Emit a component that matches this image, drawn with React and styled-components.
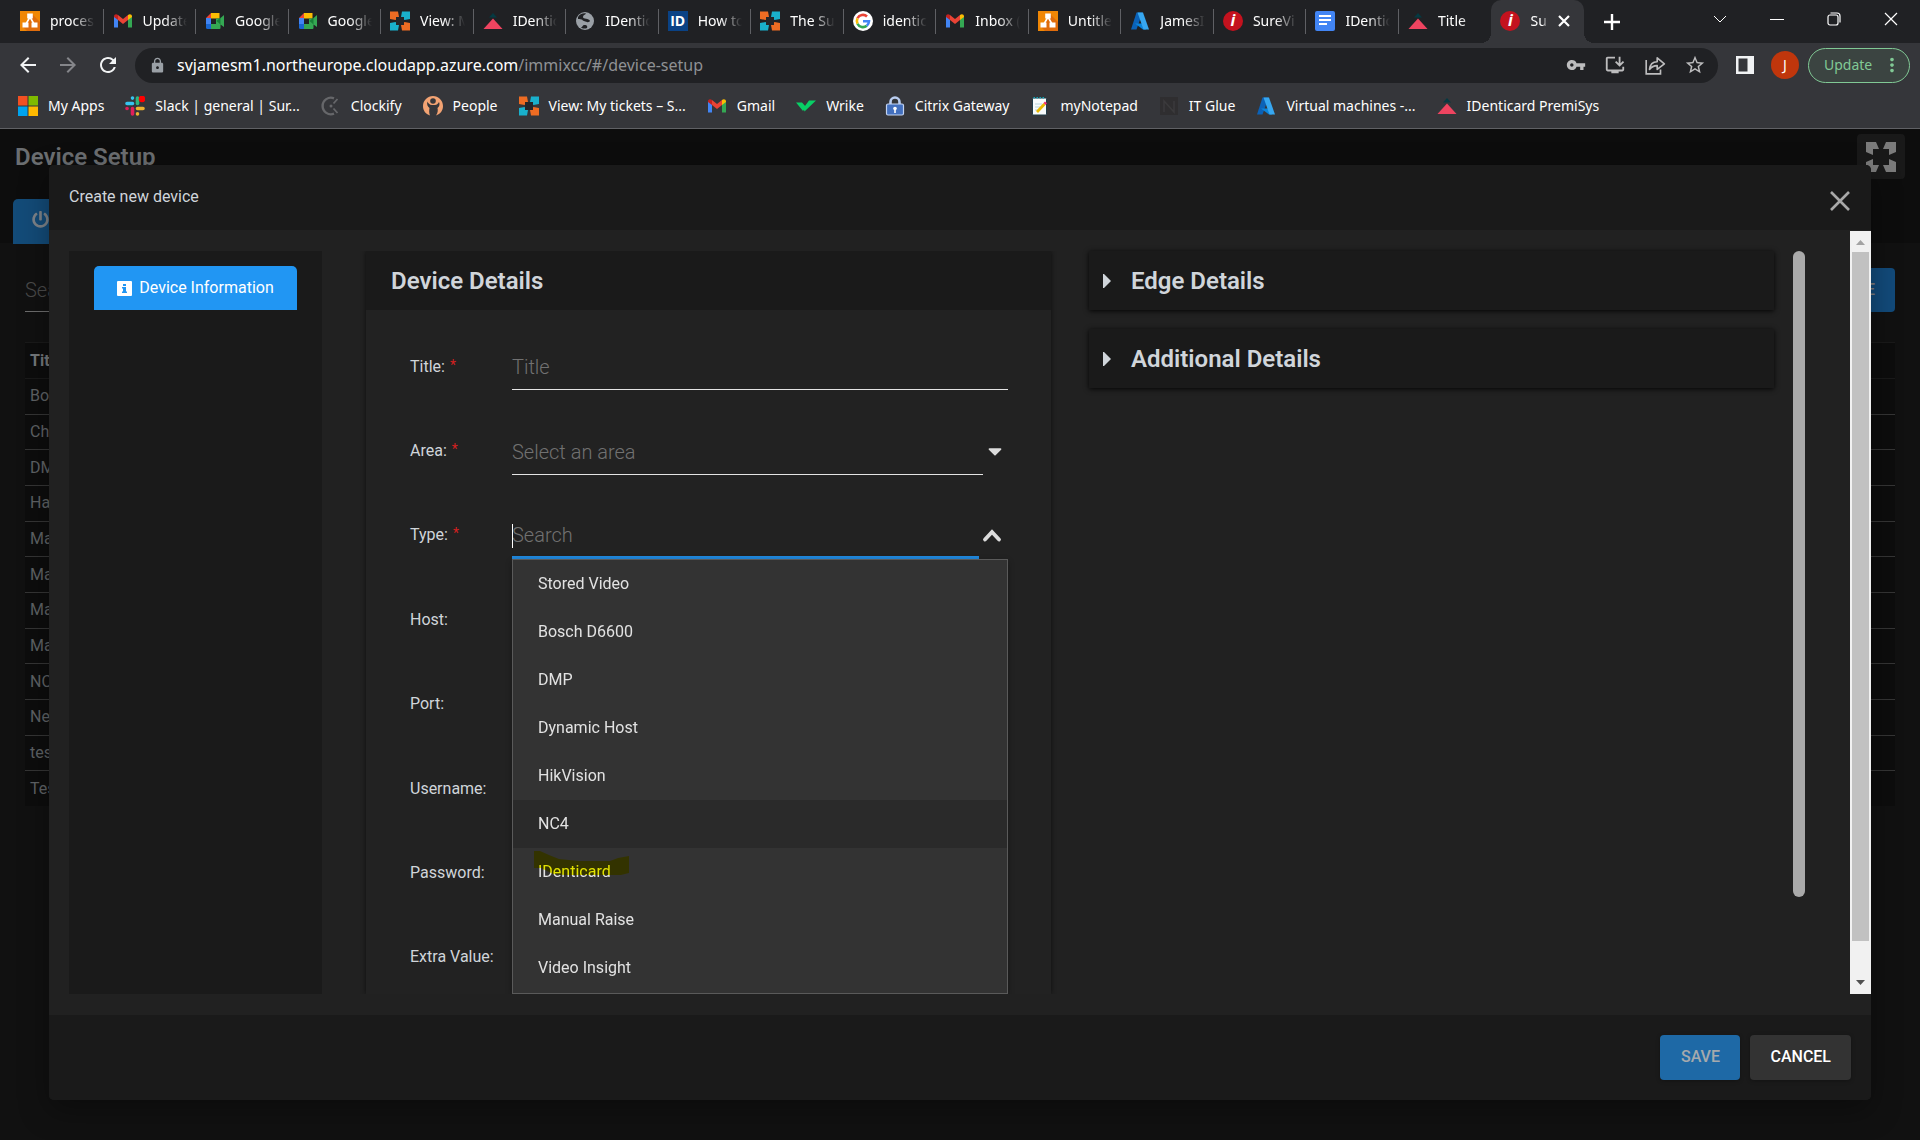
import React from "react";
import styled, { createGlobalStyle, css } from "styled-components";
import {
  MdArrowBack,
  MdArrowForward,
  MdRefresh,
  MdLock,
  MdVpnKey,
  MdInstallDesktop,
  MdStarBorder,
  MdMoreVert,
} from "react-icons/md";
import { FaPowerOff, FaCaretDown } from "react-icons/fa";

const GlobalStyle = createGlobalStyle`
  *, *::before, *::after { box-sizing: border-box; }
  html, body, #root { height: 100%; }
  body {
    margin: 0;
    overflow: hidden;
    background: #111;
    color: #d0d5da;
    font: 400 16px/24px Roboto, "Liberation Sans", sans-serif;
  }
  button, input, select { font: inherit; color: inherit; }
  button { cursor: pointer; border: 0; padding: 0; background: none; }
  svg { display: block; flex: none; }
`;

/* ---------- browser chrome ---------- */

const Window = styled.div`
  display: flex;
  flex-direction: column;
  height: 100%;
`;

const Chrome = styled.header`
  flex: none;
  background: #35363a;
  border-bottom: 1px solid #606165;
  color: #fff;
  font: 400 14px/20px "Noto Sans", "Open Sans", sans-serif;
`;

const TabStrip = styled.div`
  display: flex;
  height: 43px;
  padding-left: 11px;
  background: #202124;
`;

const TabList = styled.div`
  flex: 0 1 1573px;
  min-width: 0;
  display: grid;
  grid-template-columns: repeat(17, minmax(0, 1fr));
`;

const Tab = styled.button`
  position: relative;
  display: flex;
  align-items: center;
  gap: 10px;
  padding: 0 9px 2px;
  text-align: left;
  ${(p) =>
    p.$divided &&
    css`
      &::after {
        content: "";
        position: absolute;
        right: 0;
        top: 9px;
        height: 25px;
        width: 1px;
        background: #5f6064;
      }
    `}
  ${(p) =>
    p.$active &&
    css`
      padding-right: 14px;
      background: #35363a;
      border-radius: 10px 10px 0 0;
      &::before,
      &::after {
        content: "";
        position: absolute;
        bottom: 0;
        width: 10px;
        height: 10px;
      }
      &::before {
        right: 100%;
        background: radial-gradient(circle at 0 0, transparent 10px, #35363a 10px);
      }
      &::after {
        left: 100%;
        background: radial-gradient(circle at 100% 0, transparent 10px, #35363a 10px);
      }
    `}
`;

const TabLabel = styled.span`
  flex: 1;
  min-width: 0;
  overflow: hidden;
  white-space: nowrap;
  mask-image: linear-gradient(to right, #000 calc(100% - 22px), transparent);
`;

const ShortTabLabel = styled(TabLabel)`
  mask-image: linear-gradient(to right, #000 calc(100% - 6px), transparent);
`;

const NewTab = styled.button`
  display: flex;
  align-items: center;
  justify-content: center;
  width: 56px;
`;

const WindowButtons = styled.div`
  display: flex;
  align-items: center;
  margin-left: auto;
  height: 37px;
  padding-right: 1px;
`;

const WindowButton = styled.button`
  display: flex;
  align-items: center;
  justify-content: center;
  width: 57px;
  height: 37px;
`;

const Toolbar = styled.div`
  display: flex;
  align-items: center;
  height: 44px;
  padding: 0 10px 0 16px;
`;

const NavButton = styled.button`
  display: flex;
  width: 24px;
  margin-right: 16px;
  color: ${(p) => (p.$dim ? "#85868a" : "#f1f3f4")};
`;

const Omnibox = styled.div`
  flex: 1;
  display: flex;
  align-items: center;
  height: 35px;
  margin-left: -1px;
  padding: 0 12px 0 14px;
  border-radius: 18px;
  background: #202124;
`;

const Address = styled.div`
  flex: 1;
  margin-left: 11px;
  color: #8f9194;
  font-size: 16px;
  line-height: 24px;
  white-space: nowrap;
  b {
    color: #fff;
    font-weight: 400;
  }
`;

const OmniActions = styled.div`
  display: flex;
  align-items: center;
  gap: 18px;
  color: #bdbdbe;
  button {
    display: flex;
  }
`;

const PanelButton = styled.button`
  display: flex;
  margin-left: 18px;
`;

const Avatar = styled.button`
  width: 28px;
  height: 28px;
  margin: 0 9px 0 17px;
  border-radius: 50%;
  background: #c0360c;
  font-size: 14px;
  line-height: 28px;
`;

const UpdateButton = styled.button`
  display: flex;
  align-items: center;
  justify-content: space-between;
  width: 102px;
  height: 35px;
  padding: 0 6px 0 15px;
  border: 1px solid #81c995;
  border-radius: 18px;
  background: #3b4441;
  color: #81c995;
`;

const Bookmarks = styled.nav`
  display: flex;
  align-items: center;
  height: 41px;
  padding: 0 18px 3px;
  gap: 21px;
`;

const Bookmark = styled.a`
  display: flex;
  align-items: center;
  gap: 10px;
  color: inherit;
  text-decoration: none;
  white-space: nowrap;
`;

/* ---------- favicons ---------- */

const LetterIcon = styled.span`
  flex: none;
  width: 20px;
  height: 20px;
  border-radius: ${(p) => (p.$round ? "50%" : "0")};
  background: ${(p) => p.$bg};
  color: #fff;
  font: ${(p) => (p.$round ? "italic 700 16px/19px" : "700 14px/20px")} "Open Sans", sans-serif;
  text-align: center;
`;

const Svg = ({ size = 20, box = 20, children, ...rest }) => (
  <svg width={size} height={size} viewBox={`0 0 ${box} ${box}`} fill="none" aria-hidden="true" {...rest}>
    {children}
  </svg>
);

const Diagram = () => (
  <Svg>
    <path fill="#f08705" d="M0 0h20v20H0z" />
    <path fill="#df6c0c" d="M12 3l8 8v9H7l-4-4 6-7z" />
    <path stroke="#fff" strokeWidth="1.6" d="M10 6 6 13M10 6l4 7" />
    <path fill="#fff" d="M7.2 2.5h5.6v5H7.2zM2.5 11.5h6v5h-6zM11.5 11.5h6v5h-6z" />
  </Svg>
);
const Gmail = () => (
  <Svg>
    <path fill="#4285f4" d="M1 5v11.5h4V8z" />
    <path fill="#34a853" d="M15 8v8.5h4V5z" />
    <path fill="#ea4335" d="M5 4l5 4 5-4v5l-5 4-5-4z" />
    <path fill="#c5221f" d="M1 5.5C1 3 3.500 2.600 5 4v5L1 6z" />
    <path fill="#fbbc04" d="M19 5.5C19 3 16.5 2.600 15 4v5l4-3z" />
  </Svg>
);
const Meet = () => (
  <Svg>
    <path fill="#ea4335" d="M6 2v5H1z" />
    <path fill="#fbbc04" d="M6 2h8.5v5.5H6z" />
    <path fill="#4285f4" d="M1 7h5v6H1z" />
    <path fill="#1967d2" d="M1 13h5v5H2.5Q1 18 1 16.5z" />
    <path fill="#34a853" d="M6 13h5V7.5h4L19 4v12l-3.5-2.5V17q0 1-1 1H6z" />
    <path fill="#188038" d="M11.5 10 15.5 6.5v7z" />
  </Svg>
);
const Ring = () => (
  <Svg>
    <path fill="#ee6c23" d="M0 .5h8l1 5.5-3.5 3L0 8zM20 19.5h-8l-1-5.5 3.5-3 5.5 1z" />
    <path fill="#19b0cc" d="M20 .5h-8L11 6l3.5 3L20 8zM0 19.5h8L9 14l-3.5-3-5.5 1z" />
    <path fill="#242529" d="M6 6h8v8H6z" />
  </Svg>
);
const Peak = () => (
  <Svg>
    <path fill="#053a42" d="M10 2l4 4.5H6z" />
    <path fill="#ee4460" d="M10 7.5 19.5 18H.5z" />
  </Svg>
);
const Globe = () => (
  <Svg>
    <circle cx="10" cy="10" r="9" fill="#9aa0a6" />
    <path
      fill="#202124"
      d="M3 6c2-3.5 6-4 8-3.5-1 1.5-3 1.5-3 3.5 0 2.5 6 1 7 4-.5 1-2 1.5-3 1-2.5-1-4-1-5-2.5C6 8.5 5 8 3 8zM9 14c2 0 4 .5 3 3-2 1-5 .5-6-.5 1.5-.5 2-2.5 3-2.5z"
    />
  </Svg>
);
const Google = () => (
  <Svg>
    <circle cx="10" cy="10" r="10" fill="#fff" />
    <g strokeWidth="2.6">
      <path stroke="#ea4335" d="M4.5 7.3A6 6 0 0 1 14 5.5" />
      <path stroke="#fbbc05" d="M4.5 12.7a6 6 0 0 1 0-5.4" />
      <path stroke="#34a853" d="M4.5 12.7a6 6 0 0 0 9.3 2" />
      <path stroke="#4285f4" d="M13.8 14.7A6 6 0 0 0 16 10.3h-6" />
    </g>
  </Svg>
);
const Azure = () => (
  <Svg>
    <path fill="#0b62b8" d="M6.5 1.5h6L6.5 18.5H1z" />
    <path fill="#0a84dc" d="M5 12.5h9l2 6h-3z" />
    <path fill="#37a7f0" d="M7.5 1.5H13l6 17h-5.5z" />
  </Svg>
);
const Docs = () => (
  <Svg>
    <rect width="20" height="20" rx="2" fill="#4285f4" />
    <path stroke="#fff" strokeWidth="2" d="M4 5h12M4 9h12M4 13h8" />
  </Svg>
);
const Microsoft = () => (
  <Svg>
    <path fill="#f25022" d="M0 0h9.5v9.5H0z" />
    <path fill="#7fba00" d="M10.5 0H20v9.5h-9.5z" />
    <path fill="#00a4ef" d="M0 10.5h9.5V20H0z" />
    <path fill="#ffb900" d="M10.5 10.5H20V20h-9.5z" />
  </Svg>
);
const Slack = () => (
  <Svg>
    <g strokeWidth="3.6" strokeLinecap="round">
      <path stroke="#36c5f0" d="M2 7.5h5.5M7.5 2v.1" />
      <path stroke="#2eb67d" d="M12.5 2v5.5" />
      <path stroke="#ecb22e" d="M12.5 12.5H18M12.5 18v-.1" />
      <path stroke="#e01e5a" d="M7.5 12.5V18M2 12.5h.1" />
    </g>
    <circle cx="17" cy="3" r="3.3" fill="#f00" />
  </Svg>
);
const Clock = () => (
  <Svg>
    <path stroke="#66676a" strokeWidth="2.4" d="M13 2.3a8.3 8.3 0 1 0 0 15.4" />
    <circle cx="10" cy="10" r="1.5" fill="#66676a" />
    <path stroke="#66676a" strokeWidth="1.8" d="M12.5 7.5l4-4.5M12.5 12.5l4 4.5" />
  </Svg>
);
const Person = () => (
  <Svg>
    <path
      fill="#f3a373"
      d="M7 19.5C2.5 18 0 14.5 0 10 0 4.5 4.5 0 10 0s10 4.5 10 10c0 4.5-2.5 8-7 9.5 2-3 2-5 1.5-7.5 2-1.5 2.5-4 1.5-6-1 2-2.5 3-4 3H9C6.500 9 5 7 4.5 5.5c-1 3 0 5 2 6.5-.5 2.5-.5 5 .5 7.5z"
    />
    <circle cx="10" cy="5" r="2.8" fill="#35363a" />
    <path fill="#35363a" d="M8 9.5h4.5l-.5 5-2 5-2-5z" />
  </Svg>
);
const Check = () => (
  <Svg>
    <path fill="#08cf65" d="M0 6.5h6l4 4.5-3 4zM8.5 15.5 7.5 12 13 4.5h7z" />
  </Svg>
);
const Padlock = () => (
  <Svg>
    <path stroke="#b9cdf0" strokeWidth="2.6" d="M5.5 9V6a4.5 4.5 0 0 1 9 0v3" />
    <rect x="1.5" y="8" width="17" height="11" rx="1.5" fill="#4370bf" stroke="#c4d4f2" strokeWidth="1.2" />
    <circle cx="10" cy="12.5" r="1.8" fill="#fff" />
    <path fill="#fff" d="M9.2 13h1.6v4H9.2z" />
  </Svg>
);
const Notepad = () => (
  <Svg>
    <rect x="2.5" y="2" width="14" height="17" rx="1" fill="#f7fbfc" stroke="#213c48" />
    <path stroke="#17a3b5" strokeWidth="1.5" strokeDasharray="1.5 1.5" d="M3.5 1.8h12" />
    <path stroke="#b9d4dc" d="M5 8h7M5 11h5M5 14h3" />
    <path stroke="#e8b800" strokeWidth="2.8" d="M7 16l7.5-8" />
    <path stroke="#f02d6b" strokeWidth="2.8" d="M14.5 8l1.5-1.6" />
  </Svg>
);
const Glue = () => (
  <Svg>
    <path fill="#2f2e30" d="M1 1h18v18H1z" />
    <path stroke="#3b3a3c" strokeWidth="1.5" d="M5 16V5l10 11V5" />
  </Svg>
);
const Id = () => <LetterIcon $bg="#0a4285">ID</LetterIcon>;
const Immix = () => (
  <LetterIcon $round $bg="#c4121e">
    i
  </LetterIcon>
);

const tabs = [
  [Diagram, "proces"],
  [Gmail, "Update"],
  [Meet, "Google"],
  [Meet, "Google"],
  [Ring, "View: M"],
  [Peak, "IDentic"],
  [Globe, "IDentic"],
  [Id, "How to"],
  [Ring, "The Su"],
  [Google, "identic"],
  [Gmail, "Inbox ("],
  [Diagram, "Untitle"],
  [Azure, "JamesI"],
  [Immix, "SureVi"],
  [Docs, "IDentic"],
  [Peak, "Title"],
];

const bookmarks = [
  [Microsoft, "My Apps"],
  [Slack, "Slack | general | Sur..."],
  [Clock, "Clockify"],
  [Person, "People"],
  [Ring, "View: My tickets – S..."],
  [Gmail, "Gmail"],
  [Check, "Wrike"],
  [Padlock, "Citrix Gateway"],
  [Notepad, "myNotepad"],
  [Glue, "IT Glue"],
  [Azure, "Virtual machines -..."],
  [Peak, "IDenticard PremiSys"],
];

function BrowserChrome() {
  return (
    <Chrome>
      <TabStrip>
        <TabList>
          {tabs.map(([Icon, label], i) => (
            <Tab key={i} $divided={i < tabs.length - 1}>
              <Icon />
              <TabLabel>{label}</TabLabel>
            </Tab>
          ))}
          <Tab $active>
            <Immix />
            <ShortTabLabel>Sur</ShortTabLabel>
            <Svg size={12} box={12} stroke="#fff" strokeWidth="2.2">
              <path d="M1 1l10 10M11 1 1 11" />
            </Svg>
          </Tab>
        </TabList>
        <NewTab aria-label="New tab">
          <Svg size={16} box={16} stroke="#fff" strokeWidth="2.4">
            <path d="M8 0v16M0 8h16" />
          </Svg>
        </NewTab>
        <WindowButtons>
          <WindowButton aria-label="Search tabs">
            <Svg size={14} box={14} stroke="#fff">
              <path d="M1 4l6 6 6-6" />
            </Svg>
          </WindowButton>
          <WindowButton aria-label="Minimize">
            <Svg size={14} box={14} stroke="#fff">
              <path d="M0 7.5h14" />
            </Svg>
          </WindowButton>
          <WindowButton aria-label="Restore">
            <Svg size={14} box={14} stroke="#fff" strokeWidth="1.2">
              <rect x="1" y="3" width="10" height="10" rx="2" />
              <path d="M3.5 1H10q3 0 3 3v6.5" />
            </Svg>
          </WindowButton>
          <WindowButton aria-label="Close">
            <Svg size={14} box={14} stroke="#fff" strokeWidth="1.2">
              <path d="M1 1l12 12M13 1 1 13" />
            </Svg>
          </WindowButton>
        </WindowButtons>
      </TabStrip>
      <Toolbar>
        <NavButton aria-label="Back">
          <MdArrowBack size={24} />
        </NavButton>
        <NavButton aria-label="Forward" $dim>
          <MdArrowForward size={24} />
        </NavButton>
        <NavButton aria-label="Reload">
          <MdRefresh size={24} />
        </NavButton>
        <Omnibox>
          <MdLock size={17} color="#9aa0a6" />
          <Address>
            <b>svjamesm1.northeurope.cloudapp.azure.com</b>/immixcc/#/device-setup
          </Address>
          <OmniActions>
            <button aria-label="Passwords">
              <MdVpnKey size={20} />
            </button>
            <button aria-label="Install">
              <MdInstallDesktop size={22} />
            </button>
            <button aria-label="Share">
              <Svg size={22} box={20} stroke="currentColor" strokeWidth="1.5">
                <path d="M2 5.5V18h13v-4" />
                <path strokeLinejoin="round" d="M5 14c.5-4.5 3-7 7-7V3.5L18.5 9 12 14v-3.5c-3 0-5.200 1-7 3.500z" />
              </Svg>
            </button>
            <button aria-label="Bookmark">
              <MdStarBorder size={22} />
            </button>
          </OmniActions>
        </Omnibox>
        <PanelButton aria-label="Side panel">
          <Svg size={18} box={18}>
            <path fill="#f1f3f4" d="M0 0h18v18H0z" />
            <path fill="#35363a" d="M2.5 2.5h9v13h-9z" />
          </Svg>
        </PanelButton>
        <Avatar>J</Avatar>
        <UpdateButton>
          Update
          <MdMoreVert size={22} />
        </UpdateButton>
      </Toolbar>
      <Bookmarks>
        {bookmarks.map(([Icon, label]) => (
          <Bookmark key={label} href="#">
            <Icon />
            {label}
          </Bookmark>
        ))}
      </Bookmarks>
    </Chrome>
  );
}

/* ---------- page behind the dialog ---------- */

const Page = styled.main`
  position: relative;
  flex: 1;
  min-height: 0;
  overflow: hidden;
  background: #111;
  color: #5f6265;
`;

const PageHeader = styled.div`
  display: flex;
  justify-content: space-between;
  height: 70px;
  padding: 5px 15px 0;
  background: #0d0d0d;
  h1 {
    margin: 7px 0 0;
    color: #6b6e71;
    font-size: 24px;
    line-height: 32px;
    font-weight: 600;
  }
`;

const FullscreenButton = styled.button`
  display: flex;
  align-items: center;
  justify-content: center;
  width: 48px;
  height: 45px;
  border-radius: 4px;
  background: #191919;
`;

const PageTabs = styled.div`
  height: 44px;
  padding-left: 13px;
  background: #0d0d0d;
`;

const PageTab = styled.button`
  width: 200px;
  height: 45px;
  padding: 0 19px 4px;
  border-radius: 5px 5px 0 0;
  background: #134b78;
  color: #7d8389;
`;

const PageTools = styled.div`
  display: flex;
  justify-content: space-between;
  margin: 0 25px;
  padding-top: 25px;
  height: 99px;
`;

const PageSearch = styled.input`
  width: 240px;
  height: 44px;
  padding: 0;
  border: 0;
  border-bottom: 1px solid #6d6d6d;
  background: none;
  font-size: 20px;
  font-weight: 300;
  &::placeholder {
    color: #4a4a4a;
  }
`;

const CreateButton = styled.button`
  height: 44px;
  padding: 0 20px;
  border-radius: 4px;
  background: #124a7a;
  color: #7e7e7e;
  font-weight: 500;
`;

const DeviceTable = styled.table`
  width: calc(100% - 50px);
  height: 464px;
  margin: 0 25px;
  border-collapse: collapse;
  background: #0d0d0d;
  th,
  td {
    padding: 0 5px;
    text-align: left;
    border-top: 1px solid #353535;
  }
  th {
    height: 36px;
    border-color: #1a1a1a;
    color: #74787b;
    font-weight: 700;
  }
  tbody tr:first-child td {
    border-color: #1a1a1a;
  }
`;

const devices = ["Bos", "Che", "DMP", "Han", "Mai", "Man", "Map", "Mat", "NC4", "New", "test", "Test"];

/* ---------- dialog ---------- */

const Dialog = styled.section`
  position: absolute;
  inset: 36px 49px 40px;
  display: flex;
  flex-direction: column;
  overflow: hidden;
  border-radius: 5px;
  background: #212121;
  color: #d0d5da;
  box-shadow: 0 10px 30px rgba(0, 0, 0, 0.35);
`;

const DialogHeader = styled.header`
  flex: none;
  display: flex;
  justify-content: space-between;
  height: 65px;
  padding: 20px 20px 0;
  background: #1a1a1a;
  h2 {
    margin: 0;
    font-size: 16px;
    line-height: 24px;
    font-weight: 400;
  }
`;

const CloseButton = styled.button`
  display: flex;
  align-self: flex-start;
  padding: 6px 1px;
`;

const DialogBody = styled.div`
  flex: 1;
  min-height: 0;
  display: flex;
  padding: 1px 0 21px;
`;

const Scroller = styled.div`
  flex: 1;
  min-width: 0;
  display: flex;
  padding: 20px 45px 0 20px;
`;

const SideNav = styled.nav`
  flex: none;
  width: 253px;
  margin-right: 44px;
  padding: 15px 25px;
  background: #1a1a1a;
`;

const SideTab = styled.button`
  display: flex;
  align-items: center;
  justify-content: center;
  gap: 7px;
  width: 100%;
  height: 44px;
  border-radius: 5px 5px 0 0;
  background: #2196f3;
  color: #fff;
`;

const Columns = styled.div`
  flex: 1;
  min-width: 0;
  display: grid;
  grid-template-columns: 1fr 1fr;
  gap: 38px;
`;

const Card = styled.section`
  display: flex;
  flex-direction: column;
  min-height: 0;
  background: #222;
  box-shadow: 0 0 5px rgba(0, 0, 0, 0.6);
  clip-path: inset(0 -6px 0 -6px);
`;

const CardHeader = styled.header`
  flex: none;
  height: 59px;
  padding: 14px 25px;
  background: #1a1a1a;
`;

const headingText = css`
  margin: 0;
  font-size: 24px;
  line-height: 32px;
  font-weight: 600;
`;

const CardTitle = styled.h3`
  ${headingText}
`;

const Form = styled.form`
  flex: none;
  display: grid;
  grid-template-rows: repeat(8, 1fr);
  height: 675px;
  margin: 14px 43px 0 44px;
`;

const Field = styled.div`
  position: relative;
  display: flex;
  align-items: center;
  label {
    width: 102px;
    padding-top: 1px;
    white-space: nowrap;
  }
`;

const Required = styled.sup`
  margin-left: 5px;
  color: #d32020;
  font-size: 14px;
  line-height: 0;
  vertical-align: 2px;
`;

const control = css`
  flex: 1;
  min-width: 0;
  height: 48px;
  margin-right: ${(p) => p.$inset || 0}px;
  padding: 3px 0 0;
  border: 0;
  border-bottom: 1px solid #e4e4e4;
  border-radius: 0;
  outline: 0;
  background: none;
  font-size: 20px;
  font-weight: 300;
  &::placeholder {
    color: #717171;
    opacity: 1;
  }
`;

const TextInput = styled.input`
  ${control}
`;

const SearchInput = styled.input`
  ${control}
  border-bottom: 3px solid #2188dc;
`;

const AreaSelect = styled.select`
  ${control}
  appearance: none;
  color: #717171;
`;

const Indicator = styled.span`
  position: absolute;
  right: ${(p) => p.$right}px;
  top: 50%;
  transform: translateY(-50%);
  color: #dcdcdc;
`;

const TextCursor = styled.span`
  position: absolute;
  left: 102px;
  top: 31px;
  width: 1px;
  height: 24px;
  background: #fff;
`;

const Options = styled.ul`
  position: absolute;
  z-index: 1;
  left: 102px;
  right: 0;
  top: calc(50% + 24px);
  margin: 0;
  padding: 0 0 1px;
  list-style: none;
  border: 1px solid #5a5a5a;
  background: #333;
  color: #e2e2e2;
  box-shadow: 0 2px 6px rgba(0, 0, 0, 0.3);
`;

const Option = styled.li`
  position: relative;
  height: 48px;
  padding: 0 25px;
  line-height: 47px;
  background: ${(p) => (p.$hover ? "#2a2a2a" : "transparent")};
`;

const Marker = styled.svg`
  position: absolute;
  left: 21px;
  top: 3px;
  mix-blend-mode: multiply;
`;

const Accordions = styled.div`
  display: flex;
  flex-direction: column;
  gap: 19px;
`;

const Accordion = styled.button`
  display: flex;
  align-items: center;
  gap: 20px;
  width: 100%;
  height: 59px;
  padding: 1px 14px 0;
  background: #1a1a1a;
  box-shadow: 0 1px 5px rgba(0, 0, 0, 0.9);
  text-align: left;
`;

const AccordionTitle = styled.span`
  ${headingText}
`;

const InnerThumb = styled.div`
  flex: none;
  width: 12px;
  height: 87%;
  margin-left: 19px;
  border-radius: 6px;
  background: #aaa;
`;

const Scrollbar = styled.div`
  flex: none;
  display: flex;
  flex-direction: column;
  align-items: center;
  justify-content: space-between;
  width: 21px;
  padding: 7px 0;
  background: #f1f1f1;
`;

const ScrollThumb = styled.div`
  width: 17px;
  flex: 1;
  margin: 5px 0 37px;
  background: #c1c1c1;
`;

const DialogFooter = styled.footer`
  flex: none;
  display: flex;
  justify-content: flex-end;
  gap: 10px;
  padding: 20px;
  background: #1a1a1a;
`;

const ActionButton = styled.button`
  min-width: 80px;
  height: 45px;
  padding: 0 20px 2px;
  border-radius: 4px;
  background: ${(p) => (p.$primary ? "#1e69a6" : "#333")};
  color: ${(p) => (p.$primary ? "#a5a9ad" : "#fff")};
  font-weight: 500;
  box-shadow: 0 1px 4px rgba(0, 0, 0, 0.3);
`;

const deviceTypes = [
  "Stored Video",
  "Bosch D6600",
  "DMP",
  "Dynamic Host",
  "HikVision",
  "NC4",
  "IDenticard",
  "Manual Raise",
  "Video Insight",
];

const plainFields = ["Host", "Port", "Username", "Password", "Extra Value"];

function DeviceForm() {
  return (
    <Form onSubmit={(e) => e.preventDefault()}>
      <Field>
        <label htmlFor="title">
          Title:<Required>*</Required>
        </label>
        <TextInput id="title" placeholder="Title" />
      </Field>
      <Field>
        <label htmlFor="area">
          Area:<Required>*</Required>
        </label>
        <AreaSelect id="area" $inset={25}>
          <option>Select an area</option>
        </AreaSelect>
        <Indicator $right={2}>
          <FaCaretDown size={22} />
        </Indicator>
      </Field>
      <Field>
        <label htmlFor="type">
          Type:<Required>*</Required>
        </label>
        <SearchInput id="type" placeholder="Search" $inset={29} />
        <TextCursor />
        <Indicator $right={6}>
          <Svg size={20} stroke="currentColor" strokeWidth="3.8" strokeLinecap="round">
            <path d="M3 14.5 10 7l7 7.5" />
          </Svg>
        </Indicator>
        <Options role="listbox" aria-label="Type">
          {deviceTypes.map((name) => (
            <Option key={name} role="option" $hover={name === "NC4"}>
              {name}
              {name === "IDenticard" && (
                <Marker width="95" height="24" viewBox="0 0 95 24" aria-hidden="true">
                  <path fill="#ff0" d="M0 0h6l9 4 10 4 20 2h31l8-3 11-2v17l-12 3-16 1-25-1-23-2-12-6H0z" />
                </Marker>
              )}
            </Option>
          ))}
        </Options>
      </Field>
      {plainFields.map((name) => (
        <Field key={name}>
          <label htmlFor={name}>{name}:</label>
          <TextInput id={name} />
        </Field>
      ))}
    </Form>
  );
}

function CreateDeviceDialog() {
  return (
    <Dialog role="dialog" aria-labelledby="dialog-title">
      <DialogHeader>
        <h2 id="dialog-title">Create new device</h2>
        <CloseButton aria-label="Close dialog">
          <Svg stroke="#a8a8a8" strokeWidth="2.6">
            <path d="M1 1l18 18M19 1 1 19" />
          </Svg>
        </CloseButton>
      </DialogHeader>
      <DialogBody>
        <Scroller>
          <SideNav>
            <SideTab>
              <Svg size={15} box={15}>
                <rect width="15" height="15" rx="1" fill="#fff" />
                <path fill="#2196f3" d="M6 3h3v2H6zM5 6h4v4.5h1V12H5v-1.5h1v-3H5z" />
              </Svg>
              Device Information
            </SideTab>
          </SideNav>
          <Columns>
            <Card>
              <CardHeader>
                <CardTitle>Device Details</CardTitle>
              </CardHeader>
              <DeviceForm />
            </Card>
            <Accordions>
              {["Edge Details", "Additional Details"].map((name) => (
                <Accordion key={name} aria-expanded="false">
                  <svg width="8" height="14" viewBox="0 0 8 14" aria-hidden="true">
                    <path fill="#d0d5da" d="M0 0h1l7 7-7 7H0z" />
                  </svg>
                  <AccordionTitle>{name}</AccordionTitle>
                </Accordion>
              ))}
            </Accordions>
          </Columns>
          <InnerThumb />
        </Scroller>
        <Scrollbar aria-hidden="true">
          <Svg size={9} box={9}>
            <path fill="#a3a3a3" d="M0 7l4.500-5L9 7z" />
          </Svg>
          <ScrollThumb />
          <Svg size={9} box={9}>
            <path fill="#505050" d="M0 2l4.500 5L9 2z" />
          </Svg>
        </Scrollbar>
      </DialogBody>
      <DialogFooter>
        <ActionButton $primary>SAVE</ActionButton>
        <ActionButton>CANCEL</ActionButton>
      </DialogFooter>
    </Dialog>
  );
}

export default function App() {
  return (
    <Window>
      <GlobalStyle />
      <BrowserChrome />
      <Page>
        <PageHeader>
          <h1>Device Setup</h1>
          <FullscreenButton aria-label="Full screen">
            <Svg size={30} box={30}>
              <path
                fill="#7b7b7b"
                d="M0 0h10l3 7H7v6l-7-3zM30 0H20l-3 7h6v6l7-3zM0 30h10l3-7H7v-6l-7 3zM30 30H20l-3-7h6v-6l7 3z"
              />
            </Svg>
          </FullscreenButton>
        </PageHeader>
        <PageTabs>
          <PageTab aria-label="Devices">
            <FaPowerOff size={17} />
          </PageTab>
        </PageTabs>
        <PageTools>
          <PageSearch aria-label="Search devices" placeholder="Search" />
          <CreateButton>CREATE</CreateButton>
        </PageTools>
        <DeviceTable>
          <thead>
            <tr>
              <th>Title</th>
            </tr>
          </thead>
          <tbody>
            {devices.map((name) => (
              <tr key={name}>
                <td>{name}</td>
              </tr>
            ))}
          </tbody>
        </DeviceTable>
        <CreateDeviceDialog />
      </Page>
    </Window>
  );
}
